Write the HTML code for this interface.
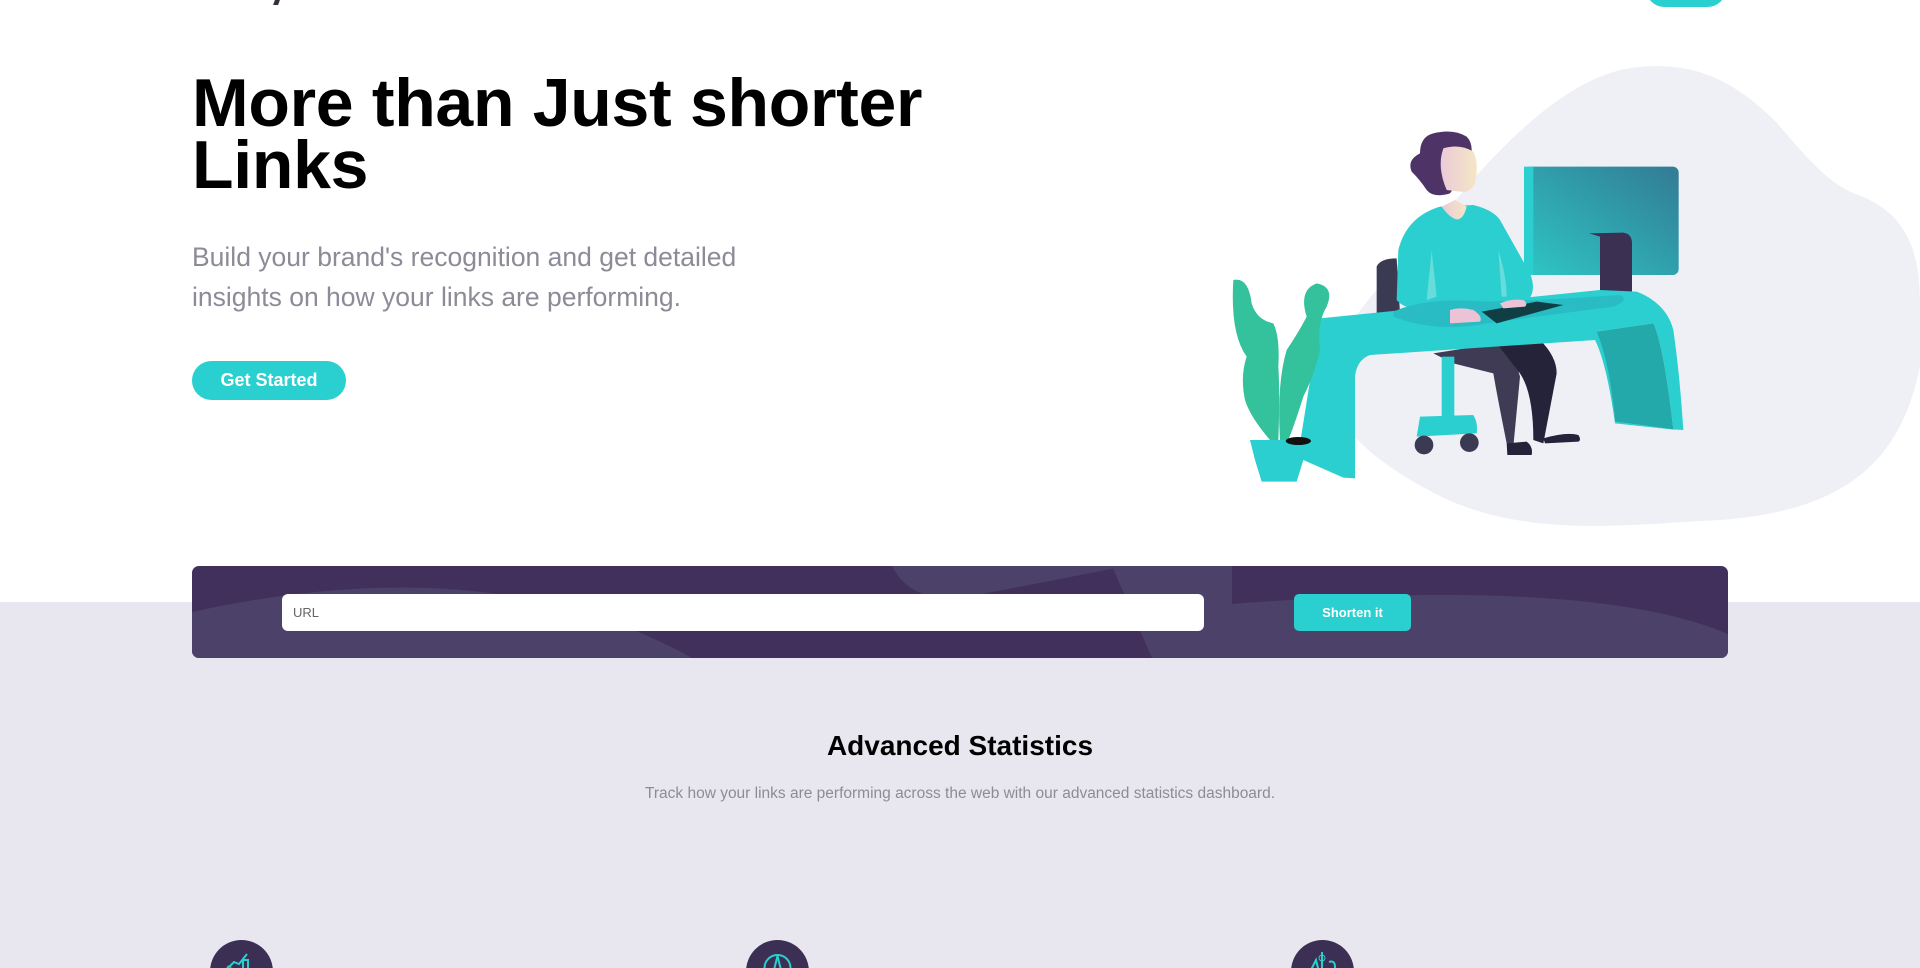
<!DOCTYPE html>
<html style="width:1920px;height:968px;overflow:hidden"><head><meta charset="utf-8"><style>
*{margin:0;padding:0;box-sizing:border-box}
body{width:1920px;height:968px;overflow:hidden;background:#fff;font-family:"Liberation Sans",sans-serif;position:relative}
.wrap{position:absolute;left:0;top:0;width:1920px;height:968px;overflow:hidden}
.grey{position:absolute;left:0;top:602px;width:1920px;height:366px;background:#e8e7f0}
h1{position:absolute;left:192px;top:72px;font-size:68px;line-height:62px;font-weight:bold;color:#000;letter-spacing:-0.3px}
p.sub{position:absolute;left:192px;top:237px;font-size:26.5px;line-height:40px;color:#8e8a97;width:620px}
.gs{position:absolute;left:192px;top:361px;width:154px;height:39px;border-radius:20px;background:#2acfcf;color:#fff;font-weight:bold;font-size:18px;text-align:center;line-height:39px}
.banner{position:absolute;left:192px;top:566px;width:1536px;height:92px;border-radius:7px;background:#42305c;overflow:hidden}
.inp{position:absolute;left:282px;top:594px;width:922px;height:37px;background:#fff;border-radius:6px;font-size:13px;color:#666;padding-left:11px;line-height:37px}
.sh{position:absolute;left:1294px;top:594px;width:117px;height:37px;background:#2acfcf;border-radius:5px;color:#fff;font-weight:bold;font-size:13px;text-align:center;line-height:37px}
h2{position:absolute;left:0;width:1920px;text-align:center;top:730px;font-size:28px;font-weight:bold;color:#000}
p.t{position:absolute;left:0;width:1920px;text-align:center;top:785px;font-size:15.5px;color:#8e8a97}
.ic{position:absolute;top:940px;width:63px;height:63px;border-radius:50%;background:#3b3054}
.topbtn{position:absolute;left:1646px;top:-30px;width:80px;height:37px;border-radius:20px;background:#2acfcf}
</style></head><body><div class="wrap">
<div class="grey"></div>
<div style="position:absolute;left:274px;top:0;width:5px;height:5px;background:#34313d;transform:skewX(-20deg)"></div>
<div class="topbtn"></div>
<h1>More than Just shorter<br>Links</h1>
<p class="sub">Build your brand's recognition and get detailed insights on how your links are performing.</p>
<div class="gs">Get Started</div>

<svg style="position:absolute;left:1220px;top:66px" width="700" height="460" viewBox="0 0 700 460">
<path d="M420 1 C480 -5 520 20 556 56 C590 95 610 120 641 130 C690 150 700 190 700 240 L700 300 C680 400 620 450 480 455 C400 460 300 470 220 430 C150 395 100 350 108 301 C130 240 200 180 249 118 C300 60 360 5 420 1Z" fill="#eff0f6"/>
</svg>

<svg style="position:absolute;left:1220px;top:110px" width="500" height="380" viewBox="0 0 1500 1140">
<defs>
<linearGradient id="mon" x1="0" y1="1" x2="1" y2="0"><stop offset="0" stop-color="#2ec6c6"/><stop offset="1" stop-color="#327b94"/></linearGradient>
<linearGradient id="face" x1="0" x2="1"><stop offset="0" stop-color="#eacbd8"/><stop offset="1" stop-color="#f5e6c4"/></linearGradient>
</defs>
<rect x="912" y="170" width="464" height="325" rx="18" fill="url(#mon)"/>
<rect x="912" y="170" width="28" height="325" fill="#2bcfcf"/>
<path d="M1108 370 L1210 368 Q1236 372 1236 400 L1236 585 L1140 595 L1105 585 L1140 575 L1140 380Z" fill="#3b2f52"/>
<path d="M470 470 Q480 445 530 445 L540 610 L470 610Z" fill="#3a3a52"/>
<path d="M640 730 L830 700 Q880 720 900 800 L880 1010 L860 1000 Q830 850 820 790 L700 760Z" fill="#3f3b55"/>
<path d="M830 700 L960 690 Q1010 740 1010 790 L970 1000 L940 990 Q940 850 900 790Z" fill="#25233a"/>
<path d="M860 1000 L920 995 Q940 1010 935 1035 L862 1035Z" fill="#25233a"/>
<path d="M970 985 Q1040 965 1075 975 Q1085 990 1075 995 L975 1000Z" fill="#25233a"/>
<rect x="665" y="740" width="38" height="200" fill="#2bcfcf"/>
<path d="M600 920 L760 915 Q775 940 770 970 L590 980Z" fill="#2bcfcf"/>
<circle cx="612" cy="1005" r="28" fill="#3a3a52"/><circle cx="748" cy="998" r="28" fill="#3a3a52"/>
<path d="M660 290 L760 285 Q820 300 840 330 L930 490 Q950 540 925 570 L690 600 Q560 610 530 570 L535 420 Q560 320 660 290Z" fill="#2bcfcf"/>
<path d="M635 420 L650 560 L620 570Z" fill="#66dcdc"/>
<path d="M835 420 Q860 500 860 560 L845 560Z" fill="#66dcdc"/>
<path d="M665 290 L705 270 L740 290 Q730 330 710 328 Q690 325 665 290Z" fill="url(#face)"/>
<path d="M640 70 Q700 55 740 80 Q770 110 740 180 L690 250 Q640 265 620 240 Q600 210 575 185 Q560 150 600 130 Q600 80 640 70Z" fill="#4e3366"/>
<path d="M670 115 Q720 100 760 125 Q778 160 765 220 Q750 250 720 245 L680 240 Q650 170 670 115Z" fill="url(#face)"/>
<path d="M300 625 L1140 540 L1250 545 Q1340 580 1360 660 Q1380 800 1390 960 L1360 958 Q1330 700 1300 640 L1130 665 Q1160 700 1170 780 L1185 935 L1360 958 L1370 960 L1185 940 Q1160 760 1125 690 L450 735 Q410 750 405 800 L405 1105 L370 1103 L250 1050 L240 1000 L300 625Z" fill="#2bcfcf"/>
<path d="M1130 665 L1300 640 Q1330 700 1360 958 L1185 935 Q1170 760 1130 665Z" fill="#24a9aa"/>
<path d="M520 605 Q620 560 800 575 Q1000 570 1200 555 Q1230 570 1180 590 Q950 620 800 640 Q650 670 520 620Z" fill="#29bcc4"/>
<path d="M785 605 L950 575 L1030 585 L830 640Z" fill="#0f3f44"/>
<path d="M690 600 Q720 590 760 600 Q790 620 780 635 L690 640Z" fill="#ebc3d5"/>
<path d="M840 580 Q870 565 910 570 Q925 580 915 590 L850 595Z" fill="#ebc3d5"/>
<path d="M40 510 Q85 500 95 580 Q110 630 160 640 Q180 680 175 770 Q180 850 175 990 L150 990 Q90 920 75 870 Q60 800 80 740 Q30 670 40 510Z" fill="#33c29b"/>
<path d="M180 990 Q170 820 200 720 Q240 660 260 620 Q235 540 290 520 Q345 530 320 590 Q290 640 300 720 Q285 790 250 860 Q225 940 205 990Z" fill="#33c29b"/>
<path d="M90 990 L270 990 L250 1050 L230 1115 L125 1115 L105 1050Z" fill="#2bcfcf"/>
<ellipse cx="235" cy="993" rx="38" ry="12" fill="#111"/>
</svg>

<div class="banner">
<svg width="1536" height="92" viewBox="0 0 1536 92" style="position:absolute;left:0;top:0">
<path d="M0 46 Q300 -20 500 92 L0 92Z" fill="#4b4169"/>
<path d="M920 0 L960 92 L1536 92 L1536 68 Q1400 10 1040 38 L1040 0Z" fill="#4b4169"/>
<path d="M700 0 Q720 40 780 30 L935 0Z" fill="#4b4169"/>
</svg>
</div>
<div class="inp">URL</div>
<div class="sh">Shorten it</div>
<h2>Advanced Statistics</h2>
<p class="t">Track how your links are performing across the web with our advanced statistics dashboard.</p>
<div class="ic" style="left:210px"><svg width="63" height="63"><path d="M18 28 L24 22 L29 24 L37 14" stroke="#2acfcf" stroke-width="2" fill="none"/><rect x="33" y="20" width="5" height="14" stroke="#2acfcf" stroke-width="2" fill="none"/><circle cx="19" cy="28" r="2" stroke="#2acfcf" fill="none"/></svg></div>
<div class="ic" style="left:746px"><svg width="63" height="63"><circle cx="31.5" cy="28" r="13" stroke="#2acfcf" stroke-width="2" fill="none"/><path d="M31.5 16 L27 34 M31.5 16 L36 34" stroke="#2acfcf" stroke-width="2"/></svg></div>
<div class="ic" style="left:1291px"><svg width="63" height="63"><path d="M20 30 L25 20 L28 32 M31 12 L31 30 M38 22 Q44 20 44 27 Q44 32 38 31" stroke="#2acfcf" stroke-width="2" fill="none"/><circle cx="31" cy="18" r="3" stroke="#2acfcf" fill="none"/></svg></div>
</div></body></html>
